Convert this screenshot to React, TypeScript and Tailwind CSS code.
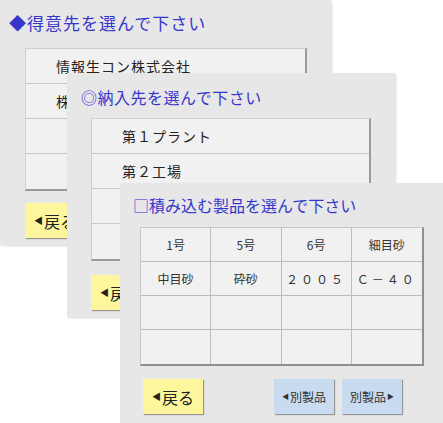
import React from 'react';

const font = { fontFamily: '"Noto Sans CJK JP", "Noto Sans", sans-serif' };

const Panel: React.FC<{ className: string; title: string; titleClass: string; children: React.ReactNode }> = ({ className, title, titleClass, children }) => (
  <div className={`absolute bg-[#e7e7e7] shadow-[1px_1px_2px_rgba(0,0,0,0.15)] ${className}`}>
    <div className={`h-[44px] flex items-center text-[#3636cc] ${titleClass}`}>{title}</div>
    {children}
  </div>
);

const List: React.FC<{ rows: string[]; className?: string }> = ({ rows, className }) => (
  <div className={`flex flex-col bg-[#f1f1f1] border border-[#d0d0d0] border-r-[#9a9a9a] border-b-[#9a9a9a] border-r-2 border-b-2 ${className ?? ''}`}>
    {rows.map((r, i) => (
      <div
        key={i}
        className={`h-[35px] flex items-center pl-[30px] text-[14px] text-[#222] tracking-[1px] ${i < rows.length - 1 ? 'border-b border-[#c9c9c9]' : ''}`}
      >
        {r}
      </div>
    ))}
  </div>
);

const BackButton: React.FC = () => (
  <div className="w-[60px] h-[35px] bg-[#fdf69c] flex items-center justify-center text-[16px] text-[#222] shadow-[1px_1px_1px_rgba(0,0,0,0.35)]">
    <span className="text-[9px] mr-[1px]">◀</span>戻る
  </div>
);

const BlueButton: React.FC<{ children: React.ReactNode }> = ({ children }) => (
  <div className="w-[60px] h-[35px] bg-[#c9dbf0] flex items-center justify-center text-[12px] text-[#333] shadow-[1px_1px_1px_rgba(0,0,0,0.35)]">
    {children}
  </div>
);

const table = [
  ['1号', '5号', '6号', '細目砂'],
  ['中目砂', '砕砂', '２００５', 'Ｃ－４０'],
  ['', '', '', ''],
  ['', '', '', ''],
];

export default function App() {
  return (
    <div className="relative w-[443px] h-[423px] bg-white overflow-hidden" style={font}>
      <Panel
        className="left-0 top-0 w-[331px] h-[245px]"
        titleClass="pl-[9px] pt-[2px] text-[17px] tracking-[1px]"
        title="◆得意先を選んで下さい"
      >
        <List className="ml-[25px] mt-[4px] w-[282px]" rows={['情報生コン株式会社', '株式会社 生コン', '', '']} />
        <div className="ml-[25px] mt-[12px]">
          <BackButton />
        </div>
      </Panel>

      <Panel
        className="left-[67px] top-[73px] w-[328px] h-[244px]"
        titleClass="pl-[14px] pt-[3px] text-[16px] tracking-[0.5px]"
        title="◎納入先を選んで下さい"
      >
        <List className="ml-[24px] mt-[1px] w-[280px]" rows={['第１プラント', '第２工場', '', '']} />
        <div className="ml-[24px] mt-[14px]">
          <BackButton />
        </div>
      </Panel>

      <Panel
        className="left-[120px] top-[183px] w-[323px] h-[240px]"
        titleClass="pl-[13px] text-[16px]"
        title="□積み込む製品を選んで下さい"
      >
        <div className="ml-[20px] w-[284px] grid grid-cols-4 bg-[#f1f1f1] border border-[#c8c8c8] border-r-2 border-b-2 border-r-[#8f8f8f] border-b-[#8f8f8f]">
          {table.map((row, ri) =>
            row.map((c, ci) => (
              <div
                key={`${ri}-${ci}`}
                className={`h-[34px] flex items-center justify-center text-[12px] text-[#333] ${ri === 1 && ci >= 2 ? 'tracking-[3px]' : ''} ${ci < 3 ? 'border-r border-[#bdbdbd]' : ''} ${ri < 3 ? 'border-b border-[#bdbdbd]' : ''}`}
              >
                {c}
              </div>
            ))
          )}
        </div>
        <div className="flex items-start mt-[13px] pl-[23px]">
          <BackButton />
          <div className="ml-[71px] flex gap-[8px]">
            <BlueButton>
              <span className="text-[7px] mr-[1px]">◀</span>別製品
            </BlueButton>
            <BlueButton>
              別製品<span className="text-[7px] ml-[1px]">▶</span>
            </BlueButton>
          </div>
        </div>
      </Panel>
    </div>
  );
}
